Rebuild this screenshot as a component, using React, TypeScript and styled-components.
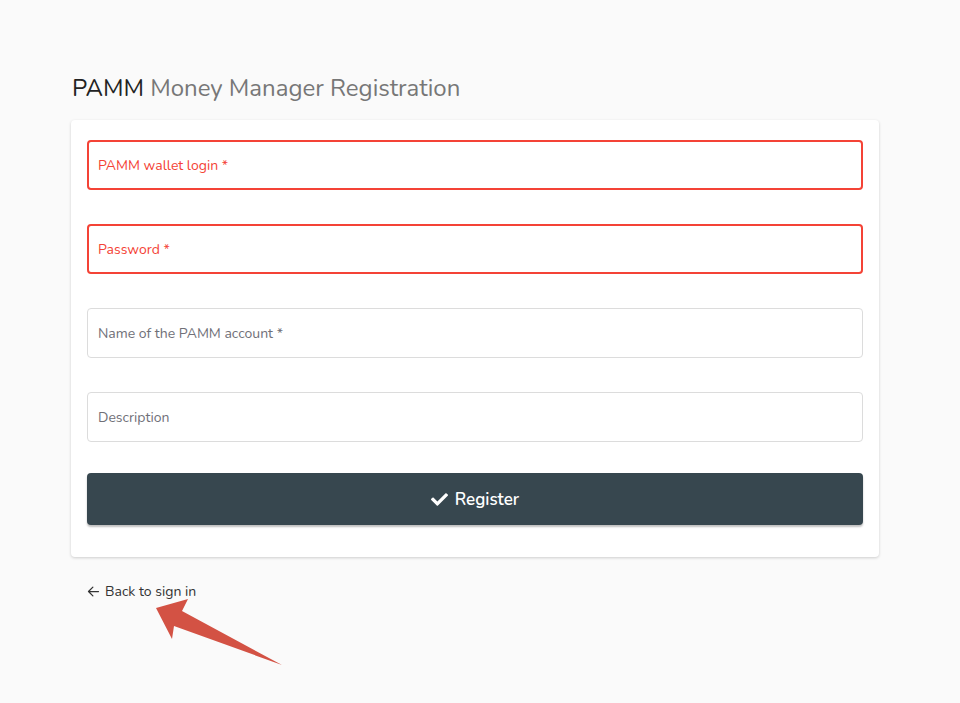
import React from 'react';
import styled, { createGlobalStyle } from 'styled-components';

const GlobalStyle = createGlobalStyle`
  html, body {
    margin: 0;
    padding: 0;
    background: #fafafa;
    font-family: 'Nunito', 'Lato', 'Noto Sans', sans-serif;
  }
`;

interface FieldDef {
  label: string;
  error: boolean;
}

const fields: FieldDef[] = [
  { label: 'PAMM wallet login *', error: true },
  { label: 'Password *', error: true },
  { label: 'Name of the PAMM account *', error: false },
  { label: 'Description', error: false },
];

export default function App() {
  return (
    <>
      <GlobalStyle />
      <Page>
        <Title>
          <Strong>PAMM</Strong> Money Manager Registration
        </Title>
        <Card>
          {fields.map((f) => (
            <Field key={f.label} $error={f.error}>
              <Label $error={f.error}>{f.label}</Label>
            </Field>
          ))}
          <RegisterButton type="button">
            <svg width="17" height="17" viewBox="0 0 512 512" fill="#fff">
              <path d="M173.898 439.404l-166.4-166.4c-9.997-9.997-9.997-26.206 0-36.204l36.203-36.204c9.997-9.998 26.207-9.998 36.204 0L192 312.69 432.095 72.596c9.997-9.997 26.207-9.997 36.204 0l36.203 36.204c9.997 9.997 9.997 26.206 0 36.204l-294.4 294.401c-9.998 9.997-26.207 9.997-36.204-.001z" />
            </svg>
            Register
          </RegisterButton>
        </Card>
        <BackLink>
          <svg
            width="15"
            height="15"
            viewBox="0 0 24 24"
            fill="none"
            stroke="#333"
            strokeWidth="2"
            strokeLinecap="round"
            strokeLinejoin="round"
          >
            <path d="M20 12H4M11 5l-7 7 7 7" />
          </svg>
          Back to sign in
        </BackLink>
        {/* annotation arrow drawn over the page */}
        <Annotation width="134" height="72" viewBox="0 0 134 72">
          <polygon points="6,13 38,4 32,16 132,70 24,31 22,44" fill="#d35244" />
        </Annotation>
      </Page>
    </>
  );
}

const Page = styled.div`
  position: relative;
  width: 808px;
  margin-left: 71px;
  padding-top: 72px;
  height: 631px;
`;

const Title = styled.h1`
  margin: 0 0 16px 1px;
  font-size: 24px;
  font-weight: 400;
  line-height: 32px;
  color: #777;
`;

const Strong = styled.span`
  color: #222;
`;

const Card = styled.div`
  background: #fff;
  border-radius: 4px;
  box-shadow: 0 1px 3px rgba(0, 0, 0, 0.18);
  padding: 20px 16px 32px;
  display: flex;
  flex-direction: column;
  gap: 34px;
`;

const Field = styled.div<{ $error: boolean }>`
  box-sizing: border-box;
  height: 50px;
  border: ${(p) => (p.$error ? '2px solid #f44336' : '1px solid #dcdcdc')};
  border-radius: 4px;
  display: flex;
  align-items: center;
  padding-left: ${(p) => (p.$error ? '9px' : '10px')};
`;

const Label = styled.span<{ $error: boolean }>`
  font-size: 14px;
  color: ${(p) => (p.$error ? '#f44336' : '#707078')};
`;

const RegisterButton = styled.button`
  margin-top: -3px;
  height: 52px;
  border: none;
  border-radius: 4px;
  background: #37474f;
  color: #fff;
  font-family: inherit;
  font-size: 17px;
  font-weight: 600;
  display: flex;
  align-items: center;
  justify-content: center;
  gap: 7px;
  box-shadow: 0 2px 2px rgba(0, 0, 0, 0.25);
`;

const BackLink = styled.a`
  margin: 25px 0 0 15px;
  display: inline-flex;
  align-items: center;
  gap: 4px;
  font-size: 14px;
  color: #333;
  cursor: pointer;
`;

const Annotation = styled.svg`
  position: absolute;
  left: 79px;
  top: 595px;
  overflow: visible;
`;
